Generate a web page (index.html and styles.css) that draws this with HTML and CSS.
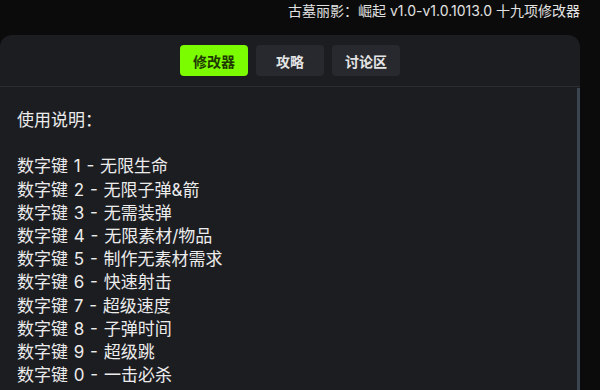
FILE: index.html
```html
<!DOCTYPE html>
<html lang="zh-CN">
<head>
<meta charset="utf-8">
<link rel="stylesheet" href="styles.css">
</head>
<body>
<div class="topbar">古墓丽影：崛起 v1.0-v1.0.1013.0 十九项修改器</div>
<div class="panel">
  <div class="tabs">
    <div class="tab active">修改器</div>
    <div class="tab">攻略</div>
    <div class="tab">讨论区</div>
  </div>
  <div class="body">
    <div class="content">
      <div class="line">使用说明：</div>
      <div class="line">&nbsp;</div>
      <div class="line">数字键 1 - 无限生命</div>
      <div class="line">数字键 2 - 无限子弹&amp;箭</div>
      <div class="line">数字键 3 - 无需装弹</div>
      <div class="line">数字键 4 - 无限素材/物品</div>
      <div class="line">数字键 5 - 制作无素材需求</div>
      <div class="line">数字键 6 - 快速射击</div>
      <div class="line">数字键 7 - 超级速度</div>
      <div class="line">数字键 8 - 子弹时间</div>
      <div class="line">数字键 9 - 超级跳</div>
      <div class="line">数字键 0 - 一击必杀</div>
    </div>
    <div class="scrollbar"></div>
  </div>
</div>
</body>
</html>
```
FILE: styles.css
```css
html, body {
  margin: 0;
  padding: 0;
  background: #0b0b0b;
  overflow: hidden;
  height: 390px;
}
body {
  font-family: Inter, "Noto Sans CJK SC", sans-serif;
  color: #e6e6e6;
}
.topbar {
  height: 35px;
  box-sizing: border-box;
  padding: 1px 20px 0 0;
  text-align: right;
  font-size: 14px;
  line-height: 19px;
  color: #e2e2e2;
}
.panel {
  width: 580px;
  height: 360px;
  background: #1c1d21;
  border-radius: 12px 12px 0 0;
  display: flex;
  flex-direction: column;
}
.tabs {
  display: flex;
  justify-content: center;
  gap: 8px;
  padding: 10px 0 10px;
  border-bottom: 1px solid #2b2d33;
}
.tab {
  width: 68px;
  height: 31px;
  border-radius: 4px;
  background: #27292e;
  color: #e4e4e4;
  font-size: 14px;
  font-weight: bold;
  display: flex;
  align-items: center;
  justify-content: center;
}
.tab.active {
  background: #7cfc00;
  color: #1f3a00;
}
.body {
  flex: 1;
  display: flex;
}
.content {
  flex: 1;
  padding: 22px 0 0 17px;
  font-size: 17px;
  line-height: 23.2px;
  word-spacing: 1px;
  color: #ececec;
}
.scrollbar {
  width: 3px;
  margin-top: 1px;
  background: #3a4551;
}
```
